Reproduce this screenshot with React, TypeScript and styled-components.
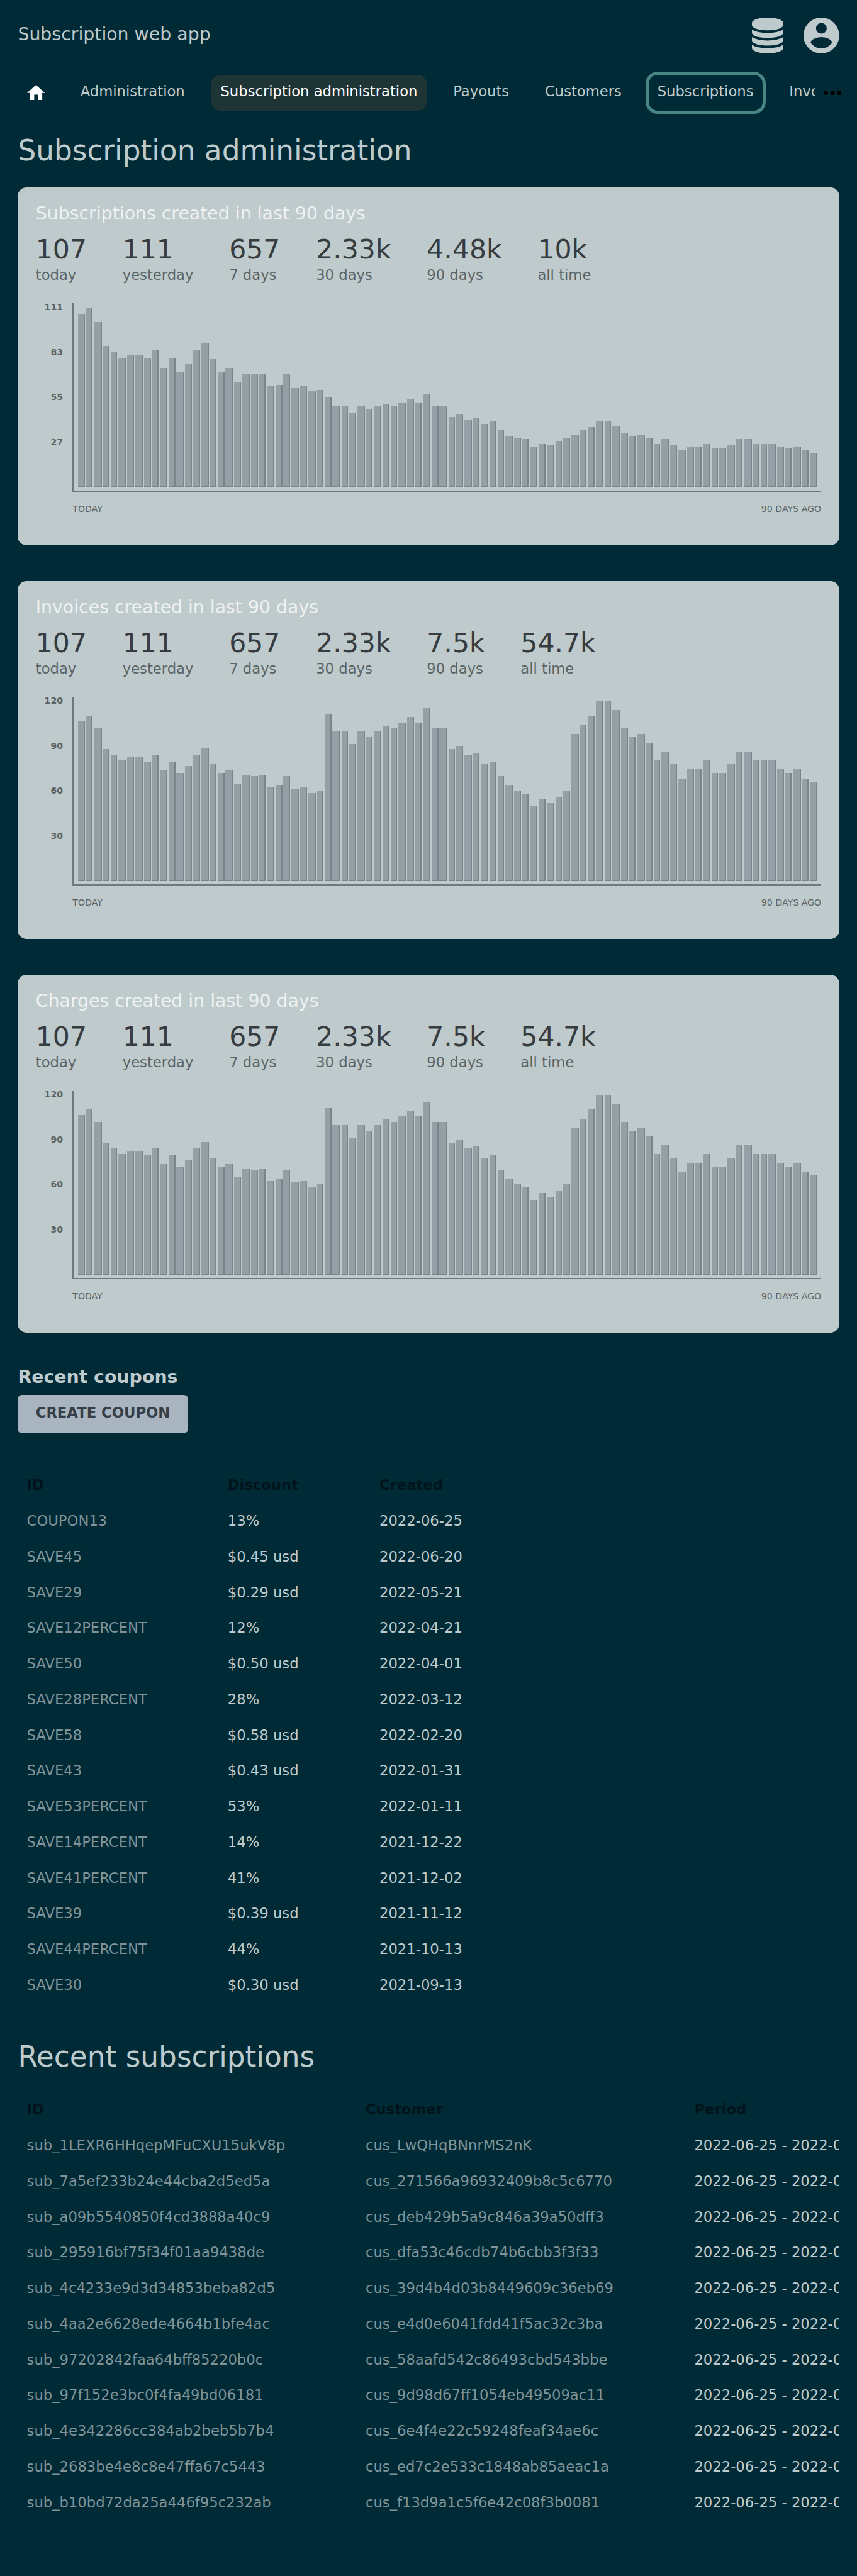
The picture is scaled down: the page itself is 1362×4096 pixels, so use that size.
import React from "react";
import styled, { createGlobalStyle } from "styled-components";

const SCALE = 1362 / 768;
const u = (n: number) => `${+(n * SCALE).toFixed(3)}px`;

// Border widths are floored by the browser, so hairlines use a whole number.
const HAIRLINE = "2px";

const color = {
  page: "#002b36",
  text: "#bfcacc",
  link: "#7f9399",
  heading: "#00151b",
  card: "#bfcacc",
  cardTitle: "#eef2f2",
  figure: "#363c3f",
  label: "#5a6466",
  axis: "#6c7a80",
  bar: "#969fa6",
  barEdge: "#78858a",
};

const GlobalStyle = createGlobalStyle`
  * { box-sizing: border-box; }
  body {
    margin: 0;
    background: ${color.page};
    color: ${color.text};
    font-family: "DejaVu Sans", sans-serif;
    font-size: ${u(12.8)};
    overflow: hidden;
  }
`;

const Page = styled.div`
  display: flex;
  flex-direction: column;
  width: ${u(768)};
  height: 4096px;
  padding: ${u(16)} ${u(16)} 0;
`;

const Header = styled.header`
  display: flex;
  justify-content: space-between;
  height: ${u(32)};
`;

const AppName = styled.div`
  font-size: ${u(16)};
  line-height: ${u(31)};
`;

const HeaderIcons = styled.div`
  display: flex;
  gap: ${u(18)};
`;

const Icon = styled.svg<{ $w: number; $h: number; $fill?: string }>`
  display: block;
  flex: none;
  width: ${(p) => u(p.$w)};
  height: ${(p) => u(p.$h)};
  fill: ${(p) => p.$fill ?? color.text};
`;

const NavBar = styled.nav`
  display: flex;
  margin-top: ${u(15)};
  height: ${u(40)};
`;

const NavScroll = styled.div`
  display: flex;
  flex: none;
  gap: ${u(16)};
  width: ${u(714)};
  padding: ${u(4)} 0;
  overflow: hidden;
`;

const NavItem = styled.a<{ $active?: boolean; $focus?: boolean }>`
  flex: none;
  height: ${u(32)};
  padding: 0 ${u(8)};
  line-height: ${u(29.4)};
  border-radius: ${u(8)};
  white-space: nowrap;
  color: ${(p) => (p.$active ? "#fff" : color.text)};
  background: ${(p) => (p.$active ? "#1f3435" : "transparent")};
  outline: ${(p) => (p.$focus ? `${u(3)} solid #488583` : "none")};
`;

const HomeLink = styled.a`
  flex: none;
  display: flex;
  align-items: center;
  justify-content: center;
  width: ${u(32)};
  height: ${u(32)};
`;

const MoreButton = styled.div`
  display: flex;
  flex: none;
  align-items: center;
  justify-content: flex-end;
  width: ${u(24)};
  height: ${u(40)};
`;

const PageTitle = styled.h1<{ $top: number }>`
  margin: ${(p) => u(p.$top)} 0 0;
  height: ${u(40)};
  line-height: ${u(40.4)};
  font-size: ${u(25.6)};
  font-weight: 400;
`;

const Cards = styled.div`
  display: flex;
  flex-direction: column;
  gap: ${u(32)};
  margin-top: ${u(13)};
`;

const Card = styled.section`
  height: ${u(321)};
  padding: ${u(16)};
  border-radius: ${u(8)};
  background: ${color.card};
`;

const CardTitle = styled.h2`
  margin: 0;
  height: ${u(24)};
  line-height: ${u(15.9)};
  font-size: ${u(16)};
  font-weight: 400;
  color: ${color.cardTitle};
`;

const Stats = styled.dl`
  display: flex;
  gap: ${u(32)};
  margin: 0;
  height: ${u(64)};
`;

const Stat = styled.div`
  display: flex;
  flex-direction: column-reverse;
  justify-content: flex-end;
`;

const StatLabel = styled.dt`
  line-height: ${u(15.4)};
  color: ${color.label};
`;

const StatValue = styled.dd`
  margin: 0;
  line-height: ${u(31.2)};
  font-size: ${u(24)};
  color: ${color.figure};
`;

const Chart = styled.div`
  display: grid;
  grid-template-columns: ${u(33)} 1fr;
`;

const Scale = styled.div`
  display: flex;
  flex-direction: column;
  padding-right: ${u(8.5)};
  text-align: right;
  font-size: ${u(8)};
  font-weight: 700;
  color: ${color.label};
`;

const Tick = styled.span`
  height: ${u(40.3)};
  line-height: ${u(6.9)};
`;

const Plot = styled.div`
  display: flex;
  align-items: flex-end;
  height: ${u(169)};
  padding: 0 0 ${u(3)} ${u(4)};
  border-left: ${HAIRLINE} solid ${color.axis};
  border-bottom: ${HAIRLINE} solid ${color.axis};
`;

const Bar = styled.div`
  flex: none;
  margin-right: ${u(1)};
  background: ${color.bar};
  border-right: ${HAIRLINE} solid ${color.barEdge};
  border-bottom: ${HAIRLINE} solid ${color.barEdge};
`;

const Range = styled.div`
  grid-column: 2;
  display: flex;
  justify-content: space-between;
  padding-top: ${u(10.5)};
  line-height: ${u(10)};
  font-size: ${u(8)};
  color: ${color.label};
`;

const SectionTitle = styled.h3`
  margin: ${u(30)} 0 0;
  height: ${u(26)};
  line-height: ${u(19.8)};
  font-size: ${u(16)};
  font-weight: 700;
`;

const Button = styled.button`
  align-self: flex-start;
  height: ${u(34)};
  padding: 0 ${u(16)} ${u(3)};
  border: 0;
  border-radius: ${u(4)};
  background: #a8b4c0;
  color: #363e47;
  font: 700 ${u(12.8)} "DejaVu Sans", sans-serif;
`;

const Table = styled.div<{ $cols: string; $top: number }>`
  display: grid;
  grid-template-columns: ${(p) => p.$cols};
  grid-auto-rows: ${u(32)};
  margin-top: ${(p) => u(p.$top)};
  overflow: hidden;
  line-height: ${u(32)};
  white-space: nowrap;
`;

const HeadCell = styled.div`
  padding-left: ${u(8)};
  font-weight: 700;
  color: ${color.heading};
`;

const Cell = styled.div<{ $link?: boolean }>`
  padding-left: ${u(8)};
  color: ${(p) => (p.$link ? color.link : color.text)};
`;

const created = [
  155, 161, 148, 127, 121, 116, 119, 119, 116, 123, 107, 116, 103, 111, 123, 129, 115, 103, 107, 94,
  102, 102, 102, 91, 92, 102, 89, 91, 86, 87, 81, 73, 73, 67, 73, 70, 73, 75, 73, 76, 79, 76, 84, 73,
  73, 63, 65, 60, 62, 57, 59, 51, 46, 44, 43, 36, 39, 38, 41, 44, 47, 51, 54, 59, 59, 55, 49, 46, 47,
  44, 39, 43, 38, 33, 36, 36, 39, 35, 35, 38, 43, 43, 39, 39, 39, 36, 35, 36, 33, 31,
];

const billed = [
  143, 148, 137, 118, 113, 108, 111, 111, 107, 113, 99, 107, 97, 103, 113, 119, 105, 97, 99, 87, 95,
  94, 95, 84, 86, 94, 83, 84, 79, 81, 150, 134, 134, 123, 134, 129, 134, 139, 137, 142, 147, 142, 155,
  137, 137, 118, 121, 113, 115, 105, 107, 94, 86, 81, 78, 67, 73, 70, 75, 81, 132, 140, 148, 161, 161,
  153, 137, 129, 132, 124, 108, 116, 105, 92, 100, 100, 108, 97, 97, 105, 116, 116, 108, 108, 108, 100,
  97, 100, 92, 89,
];

const labels = ["today", "yesterday", "7 days", "30 days", "90 days", "all time"];

const charts = [
  {
    title: "Subscriptions created in last 90 days",
    values: ["107", "111", "657", "2.33k", "4.48k", "10k"],
    ticks: [111, 83, 55, 27],
    bars: created,
  },
  {
    title: "Invoices created in last 90 days",
    values: ["107", "111", "657", "2.33k", "7.5k", "54.7k"],
    ticks: [120, 90, 60, 30],
    bars: billed,
  },
  {
    title: "Charges created in last 90 days",
    values: ["107", "111", "657", "2.33k", "7.5k", "54.7k"],
    ticks: [120, 90, 60, 30],
    bars: billed,
  },
];

const coupons = [
  ["COUPON13", "13%", "2022-06-25"],
  ["SAVE45", "$0.45 usd", "2022-06-20"],
  ["SAVE29", "$0.29 usd", "2022-05-21"],
  ["SAVE12PERCENT", "12%", "2022-04-21"],
  ["SAVE50", "$0.50 usd", "2022-04-01"],
  ["SAVE28PERCENT", "28%", "2022-03-12"],
  ["SAVE58", "$0.58 usd", "2022-02-20"],
  ["SAVE43", "$0.43 usd", "2022-01-31"],
  ["SAVE53PERCENT", "53%", "2022-01-11"],
  ["SAVE14PERCENT", "14%", "2021-12-22"],
  ["SAVE41PERCENT", "41%", "2021-12-02"],
  ["SAVE39", "$0.39 usd", "2021-11-12"],
  ["SAVE44PERCENT", "44%", "2021-10-13"],
  ["SAVE30", "$0.30 usd", "2021-09-13"],
];

const subscriptions = [
  ["sub_1LEXR6HHqepMFuCXU15ukV8p", "cus_LwQHqBNnrMS2nK"],
  ["sub_7a5ef233b24e44cba2d5ed5a", "cus_271566a96932409b8c5c6770"],
  ["sub_a09b5540850f4cd3888a40c9", "cus_deb429b5a9c846a39a50dff3"],
  ["sub_295916bf75f34f01aa9438de", "cus_dfa53c46cdb74b6cbb3f3f33"],
  ["sub_4c4233e9d3d34853beba82d5", "cus_39d4b4d03b8449609c36eb69"],
  ["sub_4aa2e6628ede4664b1bfe4ac", "cus_e4d0e6041fdd41f5ac32c3ba"],
  ["sub_97202842faa64bff85220b0c", "cus_58aafd542c86493cbd543bbe"],
  ["sub_97f152e3bc0f4fa49bd06181", "cus_9d98d67ff1054eb49509ac11"],
  ["sub_4e342286cc384ab2beb5b7b4", "cus_6e4f4e22c59248feaf34ae6c"],
  ["sub_2683be4e8c8e47ffa67c5443", "cus_ed7c2e533c1848ab85aeac1a"],
  ["sub_b10bd72da25a446f95c232ab", "cus_f13d9a1c5f6e42c08f3b0081"],
];

// Bars start on whole design pixels, so their widths alternate between 6 and 7.
const barStart = (i: number) => Math.round(69.6 + 7.378 * i);
const barWidth = (i: number) => barStart(i + 1) - barStart(i) - 1;

function ChartCard({ title, values, ticks, bars }: (typeof charts)[number]) {
  return (
    <Card>
      <CardTitle>{title}</CardTitle>
      <Stats>
        {values.map((value, i) => (
          <Stat key={labels[i]}>
            <StatLabel>{labels[i]}</StatLabel>
            <StatValue>{value}</StatValue>
          </Stat>
        ))}
      </Stats>
      <Chart>
        <Scale>
          {ticks.map((t) => (
            <Tick key={t}>{t}</Tick>
          ))}
        </Scale>
        <Plot>
          {bars.map((h, i) => (
            <Bar key={i} style={{ width: u(barWidth(i)), height: u(h) }} />
          ))}
        </Plot>
        <Range>
          <span>TODAY</span>
          <span>90 DAYS AGO</span>
        </Range>
      </Chart>
    </Card>
  );
}

export default function App() {
  return (
    <>
      <GlobalStyle />
      <Page>
        <Header>
          <AppName>Subscription web app</AppName>
          <HeaderIcons>
            <Icon $w={28} $h={32} viewBox="0 0 1536 1792" preserveAspectRatio="none">
              <path d="M768 768q237 0 443-43t325-127v170q0 69-103 128t-280 93.5-385 34.5-385-34.5-280-93.5-103-128V598q119 84 325 127t443 43zm0 768q237 0 443-43t325-127v170q0 69-103 128t-280 93.5-385 34.5-385-34.5-280-93.5-103-128v-170q119 84 325 127t443 43zm0-384q237 0 443-43t325-127v170q0 69-103 128t-280 93.5-385 34.5-385-34.5-280-93.5-103-128V982q119 84 325 127t443 43zM768 0q208 0 385 34.5t280 93.5 103 128v128q0 69-103 128t-280 93.5-385 34.5-385-34.5-280-93.5T0 384V256q0-69 103-128t280-93.5T768 0z" />
            </Icon>
            <Icon $w={32} $h={32} viewBox="2 2 20 20">
              <path d="M12 2C6.48 2 2 6.48 2 12s4.48 10 10 10 10-4.48 10-10S17.52 2 12 2zm0 3c1.66 0 3 1.34 3 3s-1.34 3-3 3-3-1.34-3-3 1.34-3 3-3zm0 14.2c-2.5 0-4.71-1.28-6-3.22.03-1.99 4-3.08 6-3.08 1.99 0 5.97 1.09 6 3.08-1.29 1.94-3.5 3.22-6 3.22z" />
            </Icon>
          </HeaderIcons>
        </Header>
        <NavBar>
          <NavScroll>
            <HomeLink>
              <Icon $w={16} $h={13.6} $fill="#fff" viewBox="2 3 20 17">
                <path d="M10 20v-6h4v6h5v-8h3L12 3 2 12h3v8z" />
              </Icon>
            </HomeLink>
            <NavItem>Administration</NavItem>
            <NavItem $active>Subscription administration</NavItem>
            <NavItem>Payouts</NavItem>
            <NavItem>Customers</NavItem>
            <NavItem $focus>Subscriptions</NavItem>
            <NavItem>Invoices</NavItem>
          </NavScroll>
          <MoreButton>
            <Icon $w={16} $h={4} $fill="#000" viewBox="0 0 32 8">
              <circle cx="4" cy="4" r="4" />
              <circle cx="16" cy="4" r="4" />
              <circle cx="28" cy="4" r="4" />
            </Icon>
          </MoreButton>
        </NavBar>
        <PageTitle $top={12}>Subscription administration</PageTitle>
        <Cards>
          {charts.map((c) => (
            <ChartCard key={c.title} {...c} />
          ))}
        </Cards>
        <SectionTitle>Recent coupons</SectionTitle>
        <Button>CREATE COUPON</Button>
        <Table $cols={`${u(180)} ${u(136)} 1fr`} $top={30.8}>
          <HeadCell>ID</HeadCell>
          <HeadCell>Discount</HeadCell>
          <HeadCell>Created</HeadCell>
          {coupons.map(([id, discount, date]) => (
            <React.Fragment key={id}>
              <Cell $link>{id}</Cell>
              <Cell>{discount}</Cell>
              <Cell>{date}</Cell>
            </React.Fragment>
          ))}
        </Table>
        <PageTitle $top={28.6}>Recent subscriptions</PageTitle>
        <Table $cols={`${u(303.6)} ${u(294.6)} 1fr`} $top={11.3}>
          <HeadCell>ID</HeadCell>
          <HeadCell>Customer</HeadCell>
          <HeadCell>Period</HeadCell>
          {subscriptions.map(([id, customer]) => (
            <React.Fragment key={id}>
              <Cell $link>{id}</Cell>
              <Cell $link>{customer}</Cell>
              <Cell>2022-06-25 - 2022-07-25</Cell>
            </React.Fragment>
          ))}
        </Table>
      </Page>
    </>
  );
}
